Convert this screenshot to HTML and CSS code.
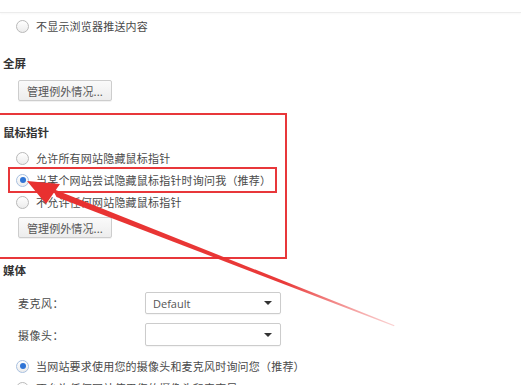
FILE: index.html
```html
<!DOCTYPE html>
<html lang="zh-CN">
<head>
<meta charset="utf-8">
<link rel="stylesheet" href="styles.css">
</head>
<body>
<div class="page">
  <div class="topbar"></div>

  <div class="radio-row first-row"><span class="radio"></span><span class="label">不显示浏览器推送内容</span></div>

  <div class="heading h-fullscreen">全屏</div>
  <div class="btn-row"><button class="btn">管理例外情况...</button></div>

  <div class="highlight-box">
    <div class="heading h-pointer">鼠标指针</div>
    <div class="radio-row r-allow"><span class="radio"></span><span class="label">允许所有网站隐藏鼠标指针</span></div>
    <div class="radio-row r-ask"><span class="radio checked"></span><span class="label">当某个网站尝试隐藏鼠标指针时询问我（推荐）</span></div>
    <div class="radio-row r-deny"><span class="radio"></span><span class="label">不允许任何网站隐藏鼠标指针</span></div>
    <div class="btn-row btn-box"><button class="btn">管理例外情况...</button></div>
  </div>

  <div class="heading h-media">媒体</div>
  <div class="select-row mic-row"><span class="select-label">麦克风：</span><span class="select"><span class="select-text">Default</span><span class="caret"></span></span></div>
  <div class="select-row cam-row"><span class="select-label">摄像头：</span><span class="select cam"><span class="select-text"></span><span class="caret"></span></span></div>
  <div class="radio-row media-ask"><span class="radio checked"></span><span class="label">当网站要求使用您的摄像头和麦克风时询问您（推荐）</span></div>
  <div class="radio-row media-deny"><span class="radio"></span><span class="label">不允许任何网站使用您的摄像头和麦克风</span></div>
</div>

<svg class="arrow" width="521" height="385" viewBox="0 0 521 385">
  <defs>
    <linearGradient id="fade" x1="28" y1="181" x2="395" y2="327" gradientUnits="userSpaceOnUse">
      <stop offset="0" stop-color="#e8302f" stop-opacity="1"/>
      <stop offset="0.7" stop-color="#e8302f" stop-opacity="0.95"/>
      <stop offset="1" stop-color="#ef6b6b" stop-opacity="0.3"/>
    </linearGradient>
  </defs>
  <polygon points="52,188.5 56.5,197 394,326.3 394.5,325.2" fill="url(#fade)"/>
  <polygon points="27,181 60,184 46,204" fill="#e8302f"/>
</svg>
</body>
</html>
```
FILE: styles.css
```css
html, body {
  margin: 0;
  padding: 0;
  background: #ffffff;
}
body {
  width: 521px;
  height: 385px;
  overflow: hidden;
  position: relative;
  font-family: "Noto Sans CJK SC", "Noto Sans", sans-serif;
  font-size: 11px;
  color: #4a4a4a;
}
.page {
  display: flex;
  flex-direction: column;
}
.topbar {
  height: 12px;
  border-bottom: 1px solid #ececec;
  box-shadow: 0 1px 2px rgba(0,0,0,0.03);
}
.radio-row {
  height: 22px;
  display: flex;
  align-items: center;
  padding-left: 16px;
  flex-shrink: 0;
}
.radio {
  width: 11px;
  height: 11px;
  border: 1px solid #b9b9b9;
  border-radius: 50%;
  background: linear-gradient(#ffffff, #ececec);
  position: relative;
  flex-shrink: 0;
}
.radio.checked {
  border-color: #a8c0e0;
}
.radio.checked::after {
  content: "";
  position: absolute;
  left: 2.5px;
  top: 2.5px;
  width: 6px;
  height: 6px;
  border-radius: 50%;
  background: #2f74d6;
}
.label {
  margin-left: 7px;
  letter-spacing: 0.2px;
  white-space: nowrap;
}
.first-row {
  margin-top: 2px;
}
.heading {
  height: 16px;
  line-height: 16px;
  padding-left: 3px;
  font-size: 11.5px;
  font-weight: bold;
  color: #333333;
  flex-shrink: 0;
}
.h-fullscreen {
  margin-top: 18px;
}
.btn-row {
  padding-left: 18px;
  margin-top: 9px;
  flex-shrink: 0;
}
.btn {
  width: 94px;
  height: 21px;
  padding: 0;
  border: 1px solid #cdcdcd;
  border-radius: 2px;
  background: linear-gradient(#fafafa, #ededed);
  font-family: "Noto Sans CJK SC", "Noto Sans", sans-serif;
  font-size: 11px;
  color: #555555;
  letter-spacing: 0.1px;
  box-shadow: 0 1px 0 rgba(0,0,0,0.05);
}
.highlight-box {
  margin-top: 12px;
  width: 285px;
  border: 2px solid #e8373a;
  border-left: none;
  padding-bottom: 19px;
  display: flex;
  flex-direction: column;
}
.h-pointer {
  margin-top: 9px;
}
.r-allow {
  margin-top: 7px;
}
.r-ask {
  margin-left: 10px;
  width: 265px;
  padding-left: 6px;
  box-sizing: border-box;
  outline: 2px solid #e8373a;
  outline-offset: 0;
}
.btn-box {
  margin-top: 4px;
}
.h-media {
  margin-top: 3px;
}
.select-row {
  display: flex;
  align-items: center;
  padding-left: 18px;
  flex-shrink: 0;
}
.mic-row {
  margin-top: 14px;
}
.cam-row {
  margin-top: 9px;
}
.select-label {
  width: 127px;
  letter-spacing: 0.5px;
}
.select {
  width: 136px;
  height: 22px;
  border: 1px solid #cccccc;
  border-radius: 2px;
  background: #ffffff;
  display: flex;
  align-items: center;
  justify-content: space-between;
  padding: 0 8px 0 7px;
  box-sizing: border-box;
  box-shadow: 0 1px 1px rgba(0,0,0,0.04);
}
.select.cam {
  height: 23px;
}
.select-text {
  font-family: "Open Sans", "Noto Sans", sans-serif;
  font-size: 11px;
  color: #555555;
}
.caret {
  width: 0;
  height: 0;
  border-left: 4px solid transparent;
  border-right: 4px solid transparent;
  border-top: 4px solid #333333;
}
.media-ask {
  margin-top: 9px;
}
.arrow {
  position: absolute;
  left: 0;
  top: 0;
  pointer-events: none;
}
```
